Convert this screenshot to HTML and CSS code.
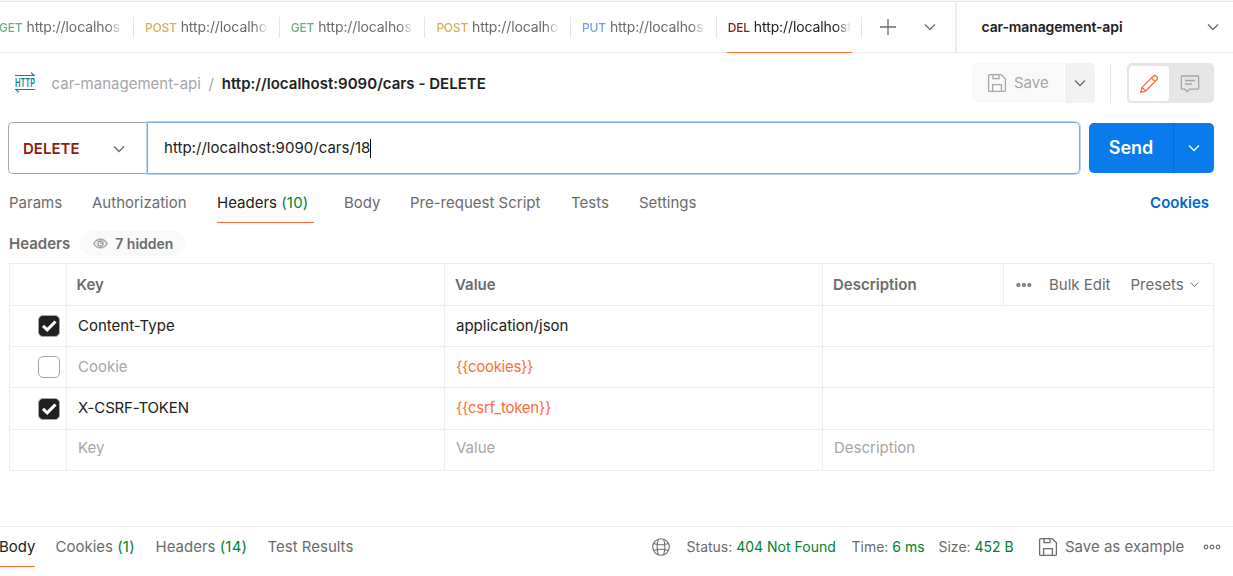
FILE: index.html
```html
<!DOCTYPE html>
<html lang="en">
<head>
<meta charset="utf-8">
<title>http://localhost:9090/cars - DELETE</title>
<link rel="stylesheet" href="styles.css">
</head>
<body>
<svg class="defs" width="0" height="0">
  <symbol id="chev" viewBox="0 0 12 12"><path d="M1 3.5 6 8.5 11 3.5" fill="none" stroke="currentColor" stroke-width="1.3"/></symbol>
  <symbol id="disk" viewBox="0 0 20 20"><path d="M2.8 1.6h11.4l4.2 4.2v11.4a1.2 1.2 0 0 1-1.2 1.2H2.8a1.2 1.2 0 0 1-1.2-1.2V2.8a1.2 1.2 0 0 1 1.2-1.2ZM6 1.6v4h6v-4M5.6 18.4v-6.8h8.8v6.8" fill="none" stroke="currentColor" stroke-width="1.3"/></symbol>
  <symbol id="dots" viewBox="0 0 18 6"><g fill="none" stroke="currentColor" stroke-width="1.2"><circle cx="3" cy="3" r="1.8"/><circle cx="9" cy="3" r="1.8"/><circle cx="15" cy="3" r="1.8"/></g></symbol>
</svg>
<div class="app">
  <header class="topbar">
    <nav class="tabs">
      <div class="tab first"><span class="name"><b class="get">GET</b>http://localhos</span></div>
      <div class="tab"><span class="name"><b class="post">POST</b>http://localho</span></div>
      <div class="tab"><span class="name"><b class="get">GET</b>http://localhos</span></div>
      <div class="tab"><span class="name"><b class="post">POST</b>http://localho</span></div>
      <div class="tab"><span class="name"><b class="put">PUT</b>http://localhos</span></div>
      <div class="tab active"><span class="name"><b class="del">DEL</b>http://localhost</span></div>
    </nav>
    <div class="tab-tools">
      <svg width="16" height="16" viewBox="0 0 16 16"><path d="M8 0v16M0 8h16" stroke="#6b6b6b" stroke-width="1.3"/></svg>
      <svg class="chev" width="12" height="12"><use href="#chev"/></svg>
    </div>
    <div class="env"><span>car-management-api</span><svg class="chev" width="12" height="12"><use href="#chev"/></svg></div>
  </header>

  <div class="crumbs">
    <svg class="http" width="22" height="22" viewBox="0 0 22 22">
      <path d="M1 3.500h20M17 .6 20 3.500M1 17.500h20M5 20.400 2 17.500" fill="none" stroke="#0f8094" stroke-width="1.200"/>
      <text x="11" y="14.600" text-anchor="middle" textLength="20" lengthAdjust="spacingAndGlyphs">HTTP</text>
    </svg>
    <span class="crumb">car-management-api</span><span class="slash">/</span><span class="title">http://localhost:9090/cars - DELETE</span>
    <div class="actions">
      <div class="save"><svg width="20" height="20"><use href="#disk"/></svg>Save</div>
      <div class="save-more"><svg class="chev" width="12" height="12"><use href="#chev"/></svg></div>
      <div class="divider"></div>
      <div class="toggle">
        <div class="toggle-on"><svg width="20" height="20" viewBox="0 0 20 20"><path d="M1.600 18.400 3 13.400 14.200 2.200a2.200 2.200 0 0 1 3.200 0l.4.4a2.200 2.200 0 0 1 0 3.200L6.600 17ZM3 13.400 6.600 17M12.400 4l3.600 3.600" fill="none" stroke="#ff6c37" stroke-width="1.300" stroke-linejoin="round"/></svg></div>
        <div class="toggle-off"><svg width="20" height="20" viewBox="0 0 20 20"><path d="M2.200 2h15.600a.9.9 0 0 1 .9.9v11.400a.9.9 0 0 1-.9.9H9.600l-2.400 2.400-2.400-2.400H2.200a.9.9 0 0 1-.9-.9V2.900a.9.9 0 0 1 .9-.9ZM5 6.500h10M5 10h7" fill="none" stroke="#a6a6a6" stroke-width="1.300"/></svg></div>
      </div>
    </div>
  </div>

  <div class="request">
    <div class="method"><span>DELETE</span><svg class="chev" width="12" height="12"><use href="#chev"/></svg></div>
    <div class="url"><span>http://localhost:9090/cars/18</span><i class="caret"></i></div>
    <div class="send"><span>Send</span><div class="send-more"><svg width="12" height="12"><use href="#chev"/></svg></div></div>
  </div>

  <nav class="subtabs">
    <span class="w1">Params</span><span class="w2">Authorization</span><span class="w3 on">Headers <em>(10)</em></span><span class="w4">Body</span><span class="w5">Pre-request Script</span><span class="w6">Tests</span><span>Settings</span>
    <a>Cookies</a>
  </nav>

  <div class="subhead">
    <span>Headers</span>
    <div class="pill"><svg width="15" height="11" viewBox="0 0 15 11"><path d="M.8 5.500C2.400 2.600 4.800 1.200 7.500 1.200s5.100 1.400 6.700 4.300C12.600 8.400 10.200 9.800 7.500 9.800S2.400 8.400.8 5.500Z" fill="none" stroke="#a6a6a6" stroke-width="1.500"/><circle cx="7.500" cy="5.500" r="2.600" fill="none" stroke="#a6a6a6" stroke-width="1.500"/><path d="M7.500 3.500v2h2" fill="none" stroke="#a6a6a6"/></svg>7 hidden</div>
  </div>

  <div class="table">
    <div class="row head">
      <div></div><div>Key</div><div>Value</div><div>Description</div>
      <div class="tools"><svg width="16" height="6" viewBox="0 0 16 6"><g fill="none" stroke="#6b6b6b" stroke-width="1.500"><circle cx="2.400" cy="3" r="1.300"/><circle cx="7.900" cy="3" r="1.300"/><circle cx="13.400" cy="3" r="1.300"/></g></svg><span class="bulk">Bulk Edit</span><span class="presets">Presets</span><svg class="chev" width="9" height="9"><use href="#chev"/></svg></div>
    </div>
    <div class="row r1"><div><i class="box checked"><svg width="22" height="22" viewBox="0 0 22 22"><path d="M5 10.800 9.200 14.800 17.500 6.500" fill="none" stroke="#fff" stroke-width="3"/></svg></i></div><div>Content-Type</div><div>application/json</div><div></div></div>
    <div class="row r2"><div><i class="box"></i></div><div class="muted">Cookie</div><div class="var">{{cookies}}</div><div></div></div>
    <div class="row r3"><div><i class="box checked"><svg width="22" height="22" viewBox="0 0 22 22"><path d="M5 10.800 9.200 14.800 17.500 6.500" fill="none" stroke="#fff" stroke-width="3"/></svg></i></div><div class="token">X-CSRF-TOKEN</div><div class="var">{{csrf_token}}</div><div></div></div>
    <div class="row r4 muted"><div></div><div>Key</div><div>Value</div><div>Description</div></div>
  </div>

  <footer class="response">
    <span class="f1 on">Body</span><span class="f2">Cookies <em>(1)</em></span><span class="f3">Headers <em>(14)</em></span><span>Test Results</span>
    <div class="status">
      <svg class="globe" width="18" height="18" viewBox="0 0 18 18"><g fill="none" stroke="#6b6b6b" stroke-width="1.100"><circle cx="9" cy="9" r="8.300"/><path d="M6.400 1.200C4.800 6 4.800 12 6.400 16.800M11.600 1.200c1.600 4.800 1.600 10.800 0 15.600M1.600 5.400c4.800 1.700 10 1.700 14.800 0M1.600 12.600c4.800-1.700 10-1.700 14.800 0"/></g></svg>
      <span class="s1">Status: <em>404 Not Found</em></span><span class="s2">Time: <em>6 ms</em></span><span class="s3">Size: <em>452 B</em></span>
      <svg class="disk" width="20" height="20"><use href="#disk"/></svg><span class="s4">Save as example</span>
      <svg class="dots" width="18" height="6"><use href="#dots"/></svg>
    </div>
  </footer>
</div>
</body>
</html>
```
FILE: styles.css
```css
* { box-sizing: border-box; }
body { margin: 0; background: #fff; font-family: Inter, "Liberation Sans", sans-serif; font-size: 15px; line-height: 20px; color: #212121; }
svg { display: block; flex: none; }
em, i { font-style: normal; }
em { color: #007f31; }
.defs { position: absolute; }
.chev { color: #6b6b6b; }
.app { width: 1233px; height: 576px; overflow: hidden; display: flex; flex-direction: column; white-space: nowrap; background: #fff; }

.topbar { height: 53px; display: flex; border-top: 1px solid #f9f9f9; border-bottom: 1px solid #ededed; box-shadow: inset 0 1px #e6e6e6; flex: none; }
.tabs { display: flex; width: 863px; margin-bottom: -1px; }
.tab { width: 145.7px; flex: none; padding: 0 10px; position: relative; display: flex; align-items: center; }
.tab.first { width: 134px; padding-left: 0; }
.tab::after { content: ""; position: absolute; right: 0; top: 16px; width: 1px; height: 21px; background: #e6e6e6; }
.name { flex: 1; height: 52px; line-height: 52px; font-size: 14px; letter-spacing: -.1px; color: #6b6b6b; -webkit-mask-image: linear-gradient(to right, #000 calc(100% - 16px), transparent calc(100% - 1px)); mask-image: linear-gradient(to right, #000 calc(100% - 16px), transparent calc(100% - 1px)); }
.tab:not(.first) .name { padding-left: 1px; }
.name b { font-size: 12px; font-weight: 500; letter-spacing: -.2px; margin-right: 4px; }
.first .name { margin-left: -1px; }
.active .name { color: #212121; }
.active::before { content: ""; position: absolute; left: 10px; right: 10px; bottom: 0; height: 1px; background: #ff6c37; }
.get { color: #6bb083; } .post { color: #d1b060; } .put { color: #74a2dc; } .del { color: #8e1a10; }
.tab-tools { width: 94px; display: flex; align-items: center; padding-left: 17px; gap: 28px; border-right: 2px solid #ededed; }
.env { flex: 1; display: flex; align-items: center; justify-content: space-between; padding: 0 14px 0 24.500px; font-size: 14px; letter-spacing: -.13px; font-weight: 600; }

.crumbs { height: 60px; flex: none; display: flex; align-items: center; padding: 0 19px 0 14px; }
.http text { font-size: 11.500px; font-weight: 600; fill: #0f8094; }
.crumb, .slash, .title { padding-top: 2px; }
.crumb { color: #a6a6a6; margin-left: 15.500px; }
.slash { color: #a6a6a6; margin: 0 8px 0 7.500px; }
.title { font-weight: 600; letter-spacing: .02px; }
.actions { margin-left: auto; display: flex; height: 40px; }
.save { width: 92px; margin-right: 1px; background: #f9f9f9; border-radius: 5px 0 0 5px; color: #a6a6a6; display: flex; align-items: center; padding-left: 15px; gap: 7px; }
.save-more { width: 30px; background: #f2f2f2; border-radius: 0 5px 5px 0; display: flex; align-items: center; justify-content: center; }
.divider { width: 1px; background: #e6e6e6; margin: 0 16px 0 15px; }
.toggle { width: 87px; background: #e6e6e6; border-radius: 5px; padding: 3px 2px 2px; display: flex; }
.toggle > div { width: 40px; display: flex; align-items: center; justify-content: center; border-radius: 4px; }
.toggle-on { background: #fff; }
.toggle > .toggle-off { width: 42px; }

.request { height: 69px; flex: none; display: flex; padding: 9px 19px 8px 8px; }
.method { width: 139px; height: 52px; border: 1px solid #a6a6a6; border-right: 0; border-radius: 5px 0 0 5px; display: flex; align-items: center; justify-content: space-between; padding: 1px 22px 0 14px; color: #8e1a10; font-weight: 600; }
.url { width: 933px; height: 52px; border: 1px solid #7aa7e0; box-shadow: 0 0 0 1px #b9d6fa; border-radius: 0 5px 5px 0; display: flex; align-items: center; padding-left: 16px; letter-spacing: .03px; }
.caret { width: 1px; height: 19px; background: #000; }
.send { margin: 1px 0 0 9px; width: 125px; height: 50px; border-radius: 5px; background: #097bed; color: #fff; display: flex; align-items: center; font-size: 18px; font-weight: 600; }
.send > span { width: 84px; text-align: center; }
.send-more { flex: 1; height: 50px; border-left: 1px solid #056bd6; display: flex; align-items: center; justify-content: center; }

.subtabs { height: 41px; flex: none; display: flex; padding: 0 24px 0 9px; color: #6b6b6b; line-height: 41px; }
.subtabs .on, .response .on { color: #212121; }
.subtabs .on::after { content: ""; display: block; width: 97px; height: 1px; background: #ff6c37; margin-top: -1px; }
.subtabs em, .response > span em { letter-spacing: .2px; }
.w1 { width: 83px; } .w2 { width: 125px; } .w3 { width: 127px; } .w4 { width: 66px; } .w5 { width: 161px; } .w6 { width: 68px; }
.subtabs a { margin-left: auto; color: #0265d2; font-weight: 600; }
.subhead { height: 40px; flex: none; display: flex; align-items: center; padding: 1px 9px 0; font-weight: 600; color: #6b6b6b; }
.pill { margin-left: 10px; width: 105px; height: 25px; border-radius: 13px; background: #f9f9f9; display: flex; align-items: center; gap: 7px; padding-left: 13px; font-size: 14px; }

.table { margin: 0 19px 0 9px; border: 1px solid #ededed; height: 208px; flex: none; }
.row { display: grid; grid-template-columns: 56px 378px 378px 1fr; height: 41px; border-bottom: 1px solid #ededed; }
.row:last-child { border-bottom: 0; }
.row.head { height: 42px; grid-template-columns: 56px 378px 378px 181px 1fr; font-weight: 600; color: #6b6b6b; }
.row.r3 { height: 42px; }
.row > div { display: flex; align-items: center; padding-left: 11px; border-left: 1px solid #ededed; }
.row.head > div { padding-left: 10px; }
.row > div:first-child { border-left: 0; padding-left: 28px; }
.row.head > div:nth-child(2) { padding-left: 9.500px; }
.row.head > div:nth-child(5) { font-weight: 400; padding-left: 12px; }
.row.r3 > div:not(:first-child) { padding-bottom: 1px; }
.row.r4 > div { padding-bottom: 5px; }
.bulk { margin-left: 17px; } .presets { margin: 0 6px 0 20px; }
.muted { color: #a6a6a6; } .var { color: #ff6c37; letter-spacing: -.3px; }
.token { letter-spacing: -.15px; }
.box { width: 22px; height: 22px; border: 1px solid #a6a6a6; border-radius: 5px; }
.box svg { margin: -1px; }
.box.checked { background: #212121; }

.response { margin-top: 55px; height: 50px; border-top: 1px solid #ededed; display: flex; color: #6b6b6b; line-height: 40px; }
.f1 { width: 56px; text-indent: -1px; } .f2 { width: 100px; } .f3 { width: 112px; }
.response > span:not(.f1) { margin-left: -.5px; margin-right: .5px; }
.response .on::after { content: ""; display: block; width: 35px; height: 1px; background: #ff6c37; margin-top: -1px; }
.status { margin-left: auto; width: 581px; height: 40px; display: flex; align-items: center; font-size: 14px; }
.s1 { width: 165px; margin-left: 16.500px; } .s2 { width: 87px; } .s3 { width: 99.500px; }
.s4 { width: 138px; margin-left: 7px; font-size: 15px; }
```
